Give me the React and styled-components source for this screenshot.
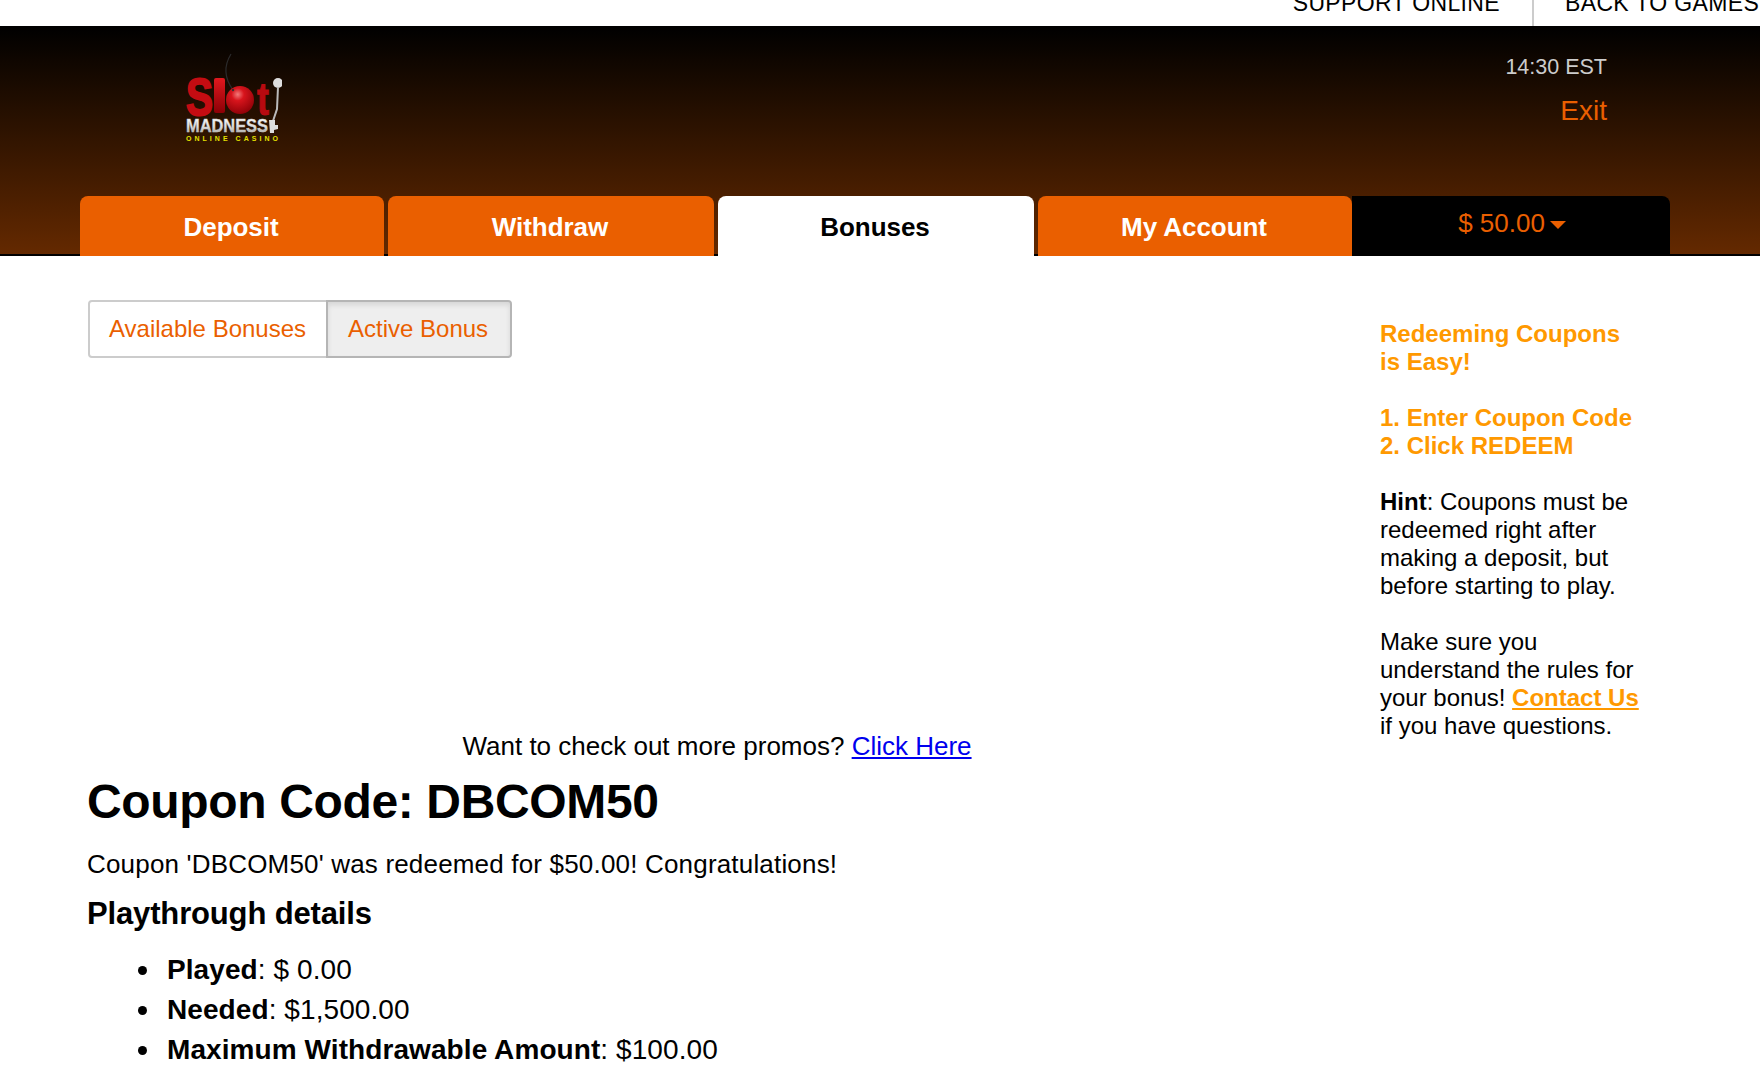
import styled, { createGlobalStyle } from "styled-components";

const GlobalStyle = createGlobalStyle`
  html, body {
    margin: 0;
    padding: 0;
    background: #fff;
    color: #000;
    font-family: "Liberation Sans", Arial, sans-serif;
  }
`;

const Page = styled.div`
  height: 1074px;
  overflow: hidden;
`;

const TopBar = styled.div`
  height: 26px;
  display: flex;
  justify-content: flex-end;
  overflow: hidden;
  background: #fff;
`;

const TopLink = styled.a`
  display: flex;
  align-items: flex-end;
  white-space: nowrap;
  font-size: 23px;
  line-height: 26px;
  letter-spacing: 0.35px;
  color: #000;
  padding: 0 32px 10px 32px;
  height: 16px;
  flex: none;
  & + & {
    border-left: 2px solid #ccc;
    height: 26px;
    padding: 0 0 10px 31px;
    width: 228px;
    box-sizing: border-box;
  }
`;

const Header = styled.header`
  height: 230px;
  box-sizing: border-box;
  border-bottom: 2px solid #000;
  background: linear-gradient(#000, #642900);
  display: flex;
  flex-direction: column;
  justify-content: space-between;
`;

const HeaderTop = styled.div`
  display: flex;
  justify-content: space-between;
  padding: 25px 153px 0 182px;
`;

const Clock = styled.div`
  display: flex;
  flex-direction: column;
  align-items: flex-end;
`;

const Time = styled.span`
  font-size: 21.5px;
  line-height: 32px;
  color: #ccc;
`;

const Exit = styled.a`
  font-size: 28px;
  line-height: 34px;
  margin-top: 11px;
  color: #ea5f00;
`;

const Nav = styled.nav`
  display: flex;
  margin: 0 0 -2px 80px;
  height: 60px;
`;

const Tab = styled.a`
  width: ${(p) => p.$w}px;
  margin-right: ${(p) => p.$gap}px;
  display: flex;
  align-items: center;
  justify-content: center;
  box-sizing: border-box;
  padding: 2px 2px 0 0;
  border-radius: 8px 8px 0 0;
  font-size: 26px;
  font-weight: 700;
  letter-spacing: -0.05px;
  background: ${(p) => (p.$active ? "#fff" : "#ea5f00")};
  color: ${(p) => (p.$active ? "#000" : "#fff")};
`;

const Balance = styled.div`
  width: 318px;
  display: flex;
  align-items: center;
  justify-content: center;
  gap: 5px;
  padding: 0 0 6px 2px;
  box-sizing: border-box;
  background: #000;
  border-radius: 0 8px 0 0;
  color: #ea5f00;
  font-size: 26px;
`;

const Caret = styled.span`
  width: 0;
  height: 0;
  margin-top: 3px;
  border-left: 8px solid transparent;
  border-right: 8px solid transparent;
  border-top: 8px solid #ea5f00;
`;

const Content = styled.div`
  display: flex;
  padding: 44px 0 0 88px;
`;

const Main = styled.main`
  width: 1258px;
  flex: none;
`;

const ButtonGroup = styled.div`
  display: flex;
  height: 58px;
`;

const ToggleButton = styled.a`
  display: flex;
  align-items: center;
  box-sizing: border-box;
  padding: ${(p) => (p.$active ? "0 22px 0 20px" : "0 20px 0 19px")};
  font-size: 24px;
  color: #ea5f00;
  border: 2px solid ${(p) => (p.$active ? "#b5b5b5" : "#ccc")};
  background: ${(p) => (p.$active ? "#eee" : "#fff")};
  box-shadow: ${(p) => (p.$active ? "inset 0 3px 5px rgba(0, 0, 0, 0.1)" : "none")};
  border-radius: ${(p) => (p.$active ? "0 4px 4px 0" : "4px 0 0 4px")};
  margin-left: ${(p) => (p.$active ? "-2px" : "0")};
`;

const Promo = styled.p`
  margin: 370px 0 0;
  text-align: center;
  font-size: 26px;
  line-height: 36px;
`;

const Link = styled.a`
  color: #00e;
  text-decoration: underline;
`;

const Title = styled.h1`
  margin: 8px 0 0 -1px;
  font-size: 48px;
  line-height: 60px;
  font-weight: 700;
  letter-spacing: -0.35px;
`;

const Message = styled.p`
  margin: 14px 0 0 -1px;
  font-size: 26px;
  line-height: 36px;
  letter-spacing: 0.18px;
`;

const SubTitle = styled.h3`
  margin: 12px 0 0 -1px;
  font-size: 31px;
  line-height: 40px;
  font-weight: 700;
  letter-spacing: -0.15px;
`;

const Details = styled.ul`
  margin: 16px 0 0;
  padding: 0 0 0 79px;
  font-size: 28px;
  line-height: 40px;
  letter-spacing: 0.08px;
  list-style: none;
`;

const DetailItem = styled.li`
  &::before {
    content: "";
    display: inline-block;
    width: 9px;
    height: 9px;
    margin: 0 20px 3px -29px;
    border-radius: 50%;
    background: #000;
    vertical-align: middle;
  }
`;

const Sidebar = styled.aside`
  margin: 20px 0 0 34px;
  width: 270px;
  font-size: 24px;
  line-height: 28px;
`;

const Orange = styled.div`
  color: #f90;
  font-weight: 700;
`;

const ContactLink = styled.a`
  color: #f90;
  font-weight: 700;
  text-decoration: underline;
`;

const Logo = () => (
  <svg width="100" height="95" viewBox="0 0 100 95" aria-label="Slot Madness">
    <defs>
      <radialGradient id="cherry" cx="0.42" cy="0.3" r="0.75">
        <stop offset="0" stopColor="#f27a7a" />
        <stop offset="0.3" stopColor="#d8141c" />
        <stop offset="1" stopColor="#8a0006" />
      </radialGradient>
      <linearGradient id="red" x1="0" y1="0" x2="0" y2="1">
        <stop offset="0" stopColor="#e0181e" />
        <stop offset="1" stopColor="#8c0006" />
      </linearGradient>
      <linearGradient id="silver" x1="0" y1="0" x2="0" y2="1">
        <stop offset="0" stopColor="#fff" />
        <stop offset="0.55" stopColor="#ddd" />
        <stop offset="1" stopColor="#888" />
      </linearGradient>
    </defs>
    <path d="M49 3 C41 16 43 28 51 39" fill="none" stroke="#2b2b2b" strokeWidth="1.2" />
    <text x="4" y="64" fontFamily="Liberation Sans" fontWeight="700" fontSize="51" fill="#c40c12" stroke="#c40c12" strokeWidth="2" textLength="27" lengthAdjust="spacingAndGlyphs">S</text>
    <rect x="32" y="27" width="11" height="35" rx="2" fill="url(#red)" />
    <circle cx="58" cy="49" r="14" fill="url(#cherry)" />
    <circle cx="51" cy="39" r="1.2" fill="#333" />
    <text x="75" y="64" fontFamily="Liberation Sans" fontWeight="700" fontSize="46" fill="#b80a10" stroke="#b80a10" strokeWidth="1" textLength="12" lengthAdjust="spacingAndGlyphs">t</text>
    <circle cx="96" cy="32" r="5" fill="#ddd" />
    <path d="M96 36 L95 58 L91 70" fill="none" stroke="#bbb" strokeWidth="2" />
    <text x="4" y="81" fontFamily="Liberation Sans" fontWeight="700" fontSize="18" fill="url(#silver)" stroke="#ccc" strokeWidth="0.4" textLength="82" lengthAdjust="spacingAndGlyphs">MADNESS</text>
    <path d="M87 69 h6 v5 h3 v4 l-4 1 v3 h-4 z" fill="#ddd" />
    <text x="4" y="90" fontFamily="Liberation Sans" fontWeight="700" fontSize="7" fill="#e4e000" textLength="92" lengthAdjust="spacing">ONLINE CASINO</text>
  </svg>
);

export default function App() {
  return (
    <Page>
      <GlobalStyle />
      <TopBar>
        <TopLink>SUPPORT ONLINE</TopLink>
        <TopLink>BACK TO GAMES</TopLink>
      </TopBar>
      <Header>
        <HeaderTop>
          <Logo />
          <Clock>
            <Time>14:30 EST</Time>
            <Exit>Exit</Exit>
          </Clock>
        </HeaderTop>
        <Nav>
          <Tab $w={304} $gap={4}>Deposit</Tab>
          <Tab $w={326} $gap={4}>Withdraw</Tab>
          <Tab $w={316} $gap={4} $active>Bonuses</Tab>
          <Tab $w={314} $gap={0}>My Account</Tab>
          <Balance>
            $ 50.00
            <Caret />
          </Balance>
        </Nav>
      </Header>
      <Content>
        <Main>
          <ButtonGroup>
            <ToggleButton>Available Bonuses</ToggleButton>
            <ToggleButton $active>Active Bonus</ToggleButton>
          </ButtonGroup>
          <Promo>
            Want to check out more promos? <Link>Click Here</Link>
          </Promo>
          <Title>Coupon Code: DBCOM50</Title>
          <Message>Coupon 'DBCOM50' was redeemed for $50.00! Congratulations!</Message>
          <SubTitle>Playthrough details</SubTitle>
          <Details>
            <DetailItem><b>Played</b>: $ 0.00</DetailItem>
            <DetailItem><b>Needed</b>: $1,500.00</DetailItem>
            <DetailItem><b>Maximum Withdrawable Amount</b>: $100.00</DetailItem>
          </Details>
        </Main>
        <Sidebar>
          <Orange>
            Redeeming Coupons
            <br />
            is Easy!
            <br />
            <br />
            1. Enter Coupon Code
            <br />
            2. Click REDEEM
          </Orange>
          <br />
          <b>Hint</b>: Coupons must be
          <br />
          redeemed right after
          <br />
          making a deposit, but
          <br />
          before starting to play.
          <br />
          <br />
          Make sure you
          <br />
          understand the rules for
          <br />
          your bonus! <ContactLink>Contact Us</ContactLink>
          <br />
          if you have questions.
        </Sidebar>
      </Content>
    </Page>
  );
}
